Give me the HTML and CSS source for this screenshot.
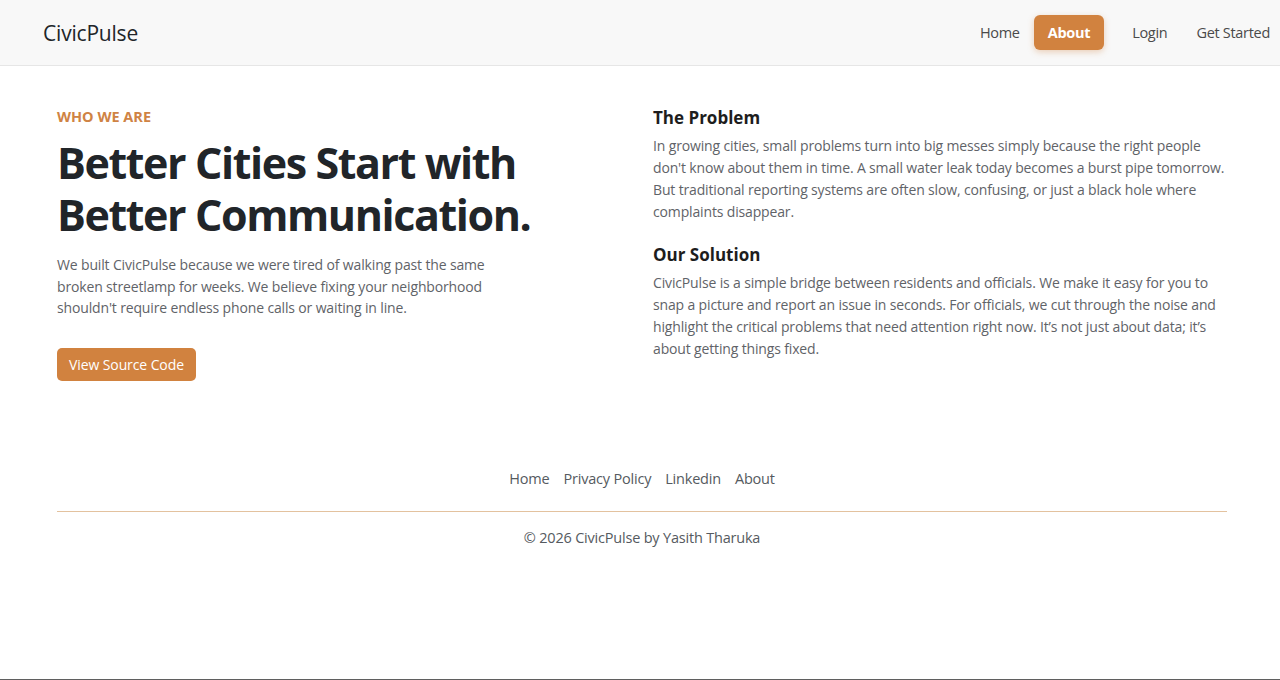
FILE: index.html
```html
<!DOCTYPE html>
<html lang="en">
<head>
<meta charset="utf-8">
<title>About - CivicPulse</title>
<link rel="stylesheet" href="styles.css">
</head>
<body>
<div class="page">
  <header class="navbar">
    <a class="brand" href="#">CivicPulse</a>
    <nav class="nav">
      <a class="nav-link" href="#">Home</a>
      <a class="nav-link active" href="#">About</a>
      <a class="nav-link login" href="#">Login</a>
      <a class="nav-link" href="#">Get Started</a>
    </nav>
  </header>

  <main class="container">
    <section class="about">
      <div class="intro">
        <p class="eyebrow">WHO WE ARE</p>
        <h1 class="title">Better Cities Start with Better Communication.</h1>
        <p class="lead">We built CivicPulse because we were tired of walking past the same broken streetlamp for weeks. We believe fixing your neighborhood shouldn't require endless phone calls or waiting in line.</p>
        <a class="btn" href="#">View Source Code</a>
      </div>
      <div class="details">
        <h2 class="subtitle">The Problem</h2>
        <p class="text">In growing cities, small problems turn into big messes simply because the right people don't know about them in time. A small water leak today becomes a burst pipe tomorrow. But traditional reporting systems are often slow, confusing, or just a black hole where complaints disappear.</p>
        <h2 class="subtitle">Our Solution</h2>
        <p class="text">CivicPulse is a simple bridge between residents and officials. We make it easy for you to snap a picture and report an issue in seconds. For officials, we cut through the noise and highlight the critical problems that need attention right now. It’s not just about data; it’s about getting things fixed.</p>
      </div>
    </section>

    <footer class="footer">
      <ul class="footer-links">
        <li><a href="#">Home</a></li>
        <li><a href="#">Privacy Policy</a></li>
        <li><a href="#">Linkedin</a></li>
        <li><a href="#">About</a></li>
      </ul>
      <p class="copy">© 2026 CivicPulse by Yasith Tharuka</p>
    </footer>
  </main>
</div>
</body>
</html>
```

FILE: styles.css
```css
* { box-sizing: border-box; }

html, body {
  margin: 0;
  padding: 0;
  background: #ffffff;
}

body {
  font-family: "Open Sans", "Noto Sans", sans-serif;
  color: #212529;
}

a { text-decoration: none; }

.page {
  min-height: 100vh;
  border-bottom: 1px solid #5f5f5f;
}

.navbar {
  height: 66px;
  background: #f8f8f8;
  border-bottom: 1px solid #e6e6e6;
  display: flex;
  align-items: center;
  justify-content: space-between;
  padding: 0 10px 0 43px;
}

.brand {
  color: #212529;
  font-size: 21px;
  letter-spacing: -0.2px;
}

.nav {
  display: flex;
  align-items: center;
  gap: 14px;
}

.nav-link {
  color: #4a4a4a;
  font-size: 14.5px;
  letter-spacing: -0.3px;
  padding: 8px 0;
}

.nav-link.active {
  background: #d1823f;
  color: #ffffff;
  font-weight: 700;
  padding: 8px 14px;
  border-radius: 6px;
  box-shadow: 0 2px 6px rgba(209, 130, 63, 0.35);
  margin-right: 14px;
}

.nav-link.login {
  margin-right: 15px;
}

.container {
  padding: 0 53px 0 57px;
}

.about {
  display: grid;
  grid-template-columns: 1fr 1fr;
  column-gap: 22px;
  padding-top: 41px;
}

.eyebrow {
  margin: 0 0 10px;
  color: #cf8344;
  font-size: 14.5px;
  line-height: 20px;
  font-weight: 700;
}

.title {
  margin: 0 0 13px;
  font-size: 43px;
  line-height: 52px;
  font-weight: 700;
  color: #212529;
  letter-spacing: -1.4px;
}

.lead {
  margin: 0 0 29px;
  font-size: 14px;
  line-height: 21.5px;
  letter-spacing: -0.15px;
  color: #5f6368;
  max-width: 440px;
}

.btn {
  display: inline-block;
  background: #d1823f;
  color: #ffffff;
  font-size: 14px;
  line-height: 21px;
  letter-spacing: -0.1px;
  padding: 6px 12px;
  border-radius: 5px;
}

.subtitle {
  margin: 0 0 6px;
  font-size: 17px;
  line-height: 22px;
  font-weight: 700;
  color: #1d1d1d;
}

.text {
  margin: 0 0 21px;
  font-size: 14px;
  line-height: 22px;
  letter-spacing: -0.15px;
  color: #5f6368;
}

.footer {
  margin-top: 86px;
}

.footer-links {
  list-style: none;
  margin: 0;
  padding: 0 0 21px;
  display: flex;
  justify-content: center;
  gap: 14px;
  border-bottom: 1px solid #e3c29f;
}

.footer-links a {
  color: #555a60;
  font-size: 14.5px;
  letter-spacing: -0.2px;
  line-height: 22px;
}

.copy {
  margin: 15px 0 0;
  text-align: center;
  color: #555a60;
  font-size: 14.5px;
  letter-spacing: -0.2px;
  line-height: 22px;
}
```
